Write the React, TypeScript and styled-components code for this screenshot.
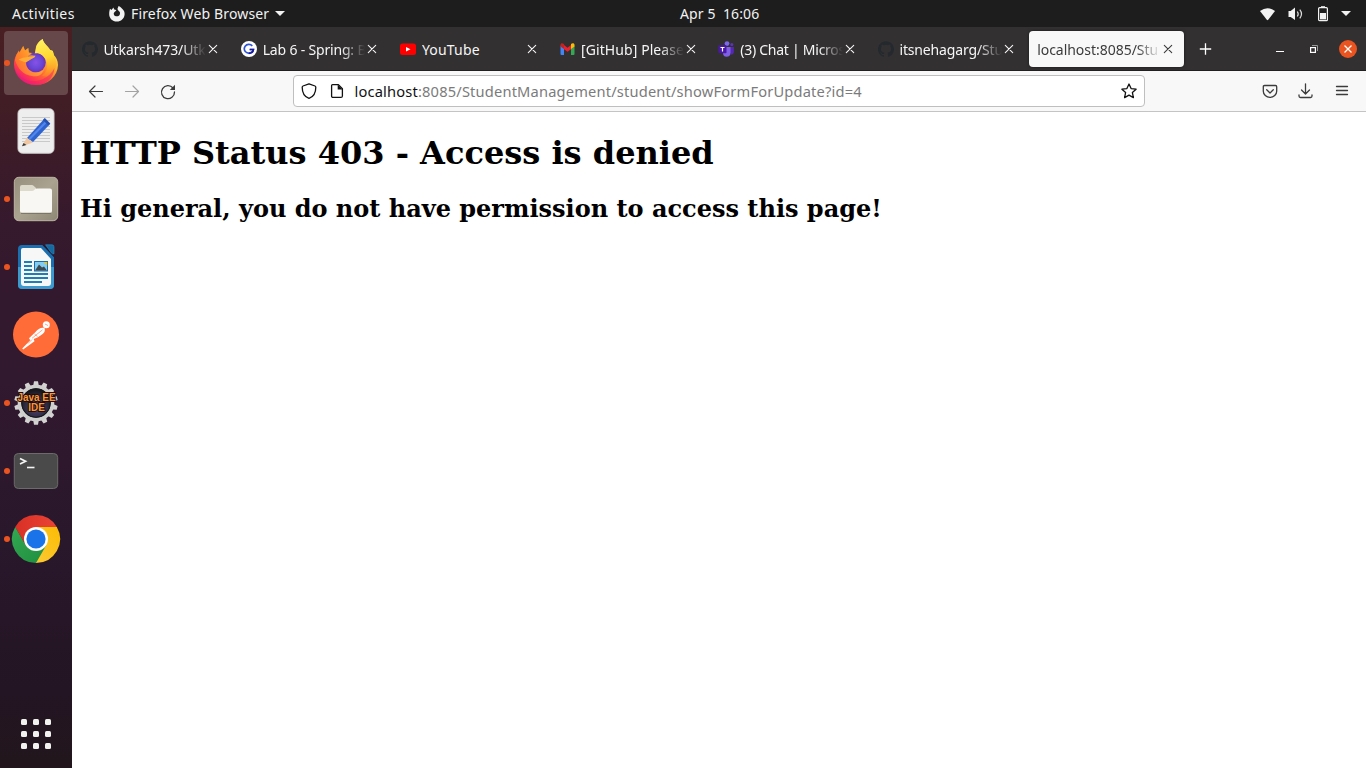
import React from 'react';
import styled, { createGlobalStyle } from 'styled-components';
import { SiGithub } from 'react-icons/si';

const GlobalStyle = createGlobalStyle`
  html, body { margin: 0; padding: 0; overflow: hidden; }
  * { box-sizing: border-box; }
  svg { display: block; flex: none; overflow: visible; }
`;

const Desktop = styled.div`
  width: 1366px;
  height: 768px;
  display: flex;
  flex-direction: column;
  overflow: hidden;
  background: #fff;
  font-family: 'Noto Sans', 'Open Sans', sans-serif;
  font-size: 14px;
`;

const SystemBar = styled.header`
  height: 27px;
  flex: none;
  display: grid;
  grid-template-columns: 680px 80px 1fr;
  align-items: center;
  background: #1d1d1d;
  color: #f2f2f2;
  line-height: 27px;
`;

const BarLeft = styled.div`
  display: flex;
  align-items: center;
  padding-left: 12px;
`;

const BarRight = styled.div`
  display: flex;
  align-items: center;
  justify-content: flex-end;
  gap: 13px;
  padding-right: 15px;
`;

const Label = styled.span<{ $spacing?: number; $width?: number }>`
  white-space: pre;
  flex: none;
  letter-spacing: ${p => p.$spacing ?? 0}px;
  width: ${p => (p.$width ? `${p.$width}px` : 'auto')};
`;

const AppMenu = styled.div`
  display: flex;
  align-items: center;
  gap: 6px;
  margin-left: 34px;
`;

const Body = styled.div`
  flex: 1;
  display: flex;
  min-height: 0;
`;

const Dock = styled.nav`
  width: 72px;
  flex: none;
  display: flex;
  flex-direction: column;
  align-items: center;
  gap: 4px;
  padding: 4px 0 2px;
  background: linear-gradient(to bottom, #491f22 0%, #3e1c27 15%, #35192d 27%, #31192f 48%, #29172b 70%, #231523 90%, #22161c 100%);
`;

const DockItem = styled.div<{ $active?: boolean; $last?: boolean }>`
  position: relative;
  width: 64px;
  height: 64px;
  flex: none;
  display: flex;
  align-items: center;
  justify-content: center;
  border-radius: 4px;
  margin-top: ${p => (p.$last ? 'auto' : '0')};
  background: ${p => (p.$active ? '#66484b' : 'transparent')};
`;

const RunningDot = styled.span`
  position: absolute;
  left: 0;
  top: 29px;
  width: 6px;
  height: 6px;
  border-radius: 50%;
  background: #e95420;
`;

const AppGrid = styled.div`
  display: grid;
  grid-template-columns: repeat(3, 6px);
  grid-auto-rows: 6px;
  gap: 6px;
`;

const GridDot = styled.i`
  border-radius: 1.5px;
  background: #f2f2ee;
`;

const Browser = styled.main`
  flex: 1;
  min-width: 0;
  display: flex;
  flex-direction: column;
`;

const TabStrip = styled.div`
  height: 44px;
  flex: none;
  display: flex;
  align-items: center;
  background: #333031;
  border-bottom: 1px solid #211f20;
`;

const Tab = styled.div<{ $selected?: boolean }>`
  width: 155.2px;
  height: 36px;
  flex: none;
  margin: 0 2px;
  padding: 0 10px 0 8px;
  display: flex;
  align-items: center;
  border-radius: 4px;
  color: ${p => (p.$selected ? '#3b3b3b' : '#f6f6f6')};
  background: ${p => (p.$selected ? '#f8f8f8' : 'transparent')};
  box-shadow: ${p => (p.$selected ? '0 0 3px rgba(0,0,0,.55)' : 'none')};
`;

const Favicon = styled.span`
  width: 16px;
  height: 16px;
  margin-right: 5.5px;
  flex: none;
`;

const TabTitle = styled.span<{ $spacing: number; $fade?: boolean }>`
  flex: 1;
  min-width: 0;
  overflow: hidden;
  white-space: nowrap;
  padding-top: 2px;
  line-height: 20px;
  letter-spacing: ${p => p.$spacing}px;
  mask-image: ${p => (p.$fade ? 'linear-gradient(to left, transparent, black 24px)' : 'none')};
`;

const CloseTab = styled.span`
  width: 12px;
  margin-left: 1px;
  display: flex;
  justify-content: center;
`;

const NewTab = styled.span`
  margin-left: 13px;
`;

const WindowControls = styled.div`
  margin-left: auto;
  padding-right: 9px;
  display: flex;
  align-items: center;
`;

const ControlSlot = styled.span`
  width: 34px;
  display: flex;
  justify-content: center;
  &:last-child { width: 18px; margin-left: 8px; }
`;

const Toolbar = styled.div`
  height: 41px;
  flex: none;
  display: flex;
  align-items: center;
  background: #f8f8f8;
  border-bottom: 1px solid #c4c4c4;
  padding: 0 16px;
  color: #3b3b3b;
`;

const NavButtons = styled.div`
  display: flex;
  gap: 20px;
  width: 205px;
`;

const UrlField = styled.div`
  width: 852px;
  height: 32px;
  display: flex;
  align-items: center;
  padding: 0 7px;
  background: #fff;
  border: 1px solid #bfbfbf;
  border-radius: 4px;
  color: #111;
`;

const UrlIcons = styled.span`
  display: flex;
  gap: 12px;
  margin-right: 9.5px;
`;

const UrlText = styled.span<{ $spacing: number }>`
  flex: 1;
  font-size: 14.67px;
  line-height: 20px;
  color: #7b7b7b;
  letter-spacing: ${p => p.$spacing}px;
  b { font-weight: 400; color: #111; }
`;

const ToolActions = styled.div`
  display: flex;
  gap: 20px;
  margin-left: auto;
`;

const Page = styled.article`
  flex: 1;
  padding: 1px 8px 0;
  overflow: hidden;
  background: #fff;
  color: #000;
  font-family: 'DejaVu Serif', serif;
  font-size: 16px;
`;

const Title = styled.h1`
  font-size: 32px;
  margin: 21.44px 0;
`;

const Subtitle = styled.h2`
  font-size: 24px;
  margin: 19.92px 0;
`;

const stroke = { fill: 'none', stroke: 'currentColor', strokeLinecap: 'round', strokeLinejoin: 'round' } as const;

const Caret = () => (
  <svg width="10" height="5" viewBox="0 0 10 5"><path d="M0 0h10L5 5z" fill="#f2f2f2" /></svg>
);

const FirefoxMono = () => (
  <svg width="16" height="16" viewBox="0 0 16 16">
    <path fill="#f2f2f2" d="M1 2.800 2.400 4 4.500 1.500l.6 1.900c1 .1 1.700.4 2.300 1.200L5.800 5.800c-1 .8-1.400 2-.7 3.100 1.100 2 4.600 1.900 5.600-.2.800-2 .1-3.100-1.200-3.900L8.400 2.900 9.600 0c2.300.8 2.700 2 3.800 2.900 1.700 1.400 2.400 3.200 2.200 5.600-.4 4.200-3.600 7.100-7.700 7.100C3.400 15.600.2 12.200.2 8.200.2 6 .5 4.500 1 2.800z" />
  </svg>
);

const WifiIcon = () => (
  <svg width="16" height="14" viewBox="0 0 16 14"><path d="M0 4Q7.500-1.600 15 4L8.200 12.800Q7.500 13.600 6.800 12.800z" fill="#f2f2f2" /></svg>
);
const VolumeIcon = () => (
  <svg width="16" height="16" viewBox="0 0 16 16">
    <path d="M-.500 5h2.200L6 1.500v12.500L1.700 11H-.500z" fill="#f2f2f2" />
    <path d="M8.300 5.500q1.800 2.500 0 5M10.800 3.700q3.400 4.300 0 8.600" fill="none" stroke="#ddd" strokeWidth="1.200" />
  </svg>
);
const BatteryIcon = () => (
  <svg width="10" height="16" viewBox="0 0 10 16">
    <path d="M3 .2h4V2H3z" fill="#f2f2f2" />
    <rect x=".6" y="1.700" width="8.800" height="13" rx="1" fill="none" stroke="#f2f2f2" strokeWidth="1.200" />
    <path d="M2 7h6v6.400H2z" fill="#f2f2f2" />
  </svg>
);

const FirefoxIcon = () => (
  <svg width="48" height="48" viewBox="0 0 48 48">
    <defs>
      <linearGradient id="fxBody" x1=".85" y1=".1" x2=".2" y2=".95">
        <stop offset="0" stopColor="#fff44f" /><stop offset=".35" stopColor="#ffb02e" />
        <stop offset=".6" stopColor="#ff6a33" /><stop offset=".82" stopColor="#ff3750" /><stop offset="1" stopColor="#e31587" />
      </linearGradient>
      <linearGradient id="fxFlame" x1=".4" y1="0" x2=".6" y2="1">
        <stop offset="0" stopColor="#fff261" /><stop offset=".5" stopColor="#ffd832" /><stop offset="1" stopColor="#ff8a20" stopOpacity=".4" />
      </linearGradient>
      <radialGradient id="fxGlobe" cx=".5" cy=".5" r=".55">
        <stop offset="0" stopColor="#8a50e8" /><stop offset=".5" stopColor="#6a4ad8" /><stop offset="1" stopColor="#6a2bb6" />
      </radialGradient>
      <linearGradient id="fxFox" x1="0" y1="0" x2="1" y2=".2">
        <stop offset="0" stopColor="#ff8a1c" /><stop offset="1" stopColor="#ffbd3a" />
      </linearGradient>
    </defs>
    <path d="M4.500 15.500 7 11.400l.4 2.300L11.200 7l1.800 4.400L16.300 9l.5 4.600 6.500 1 .7-7.400C25.800 3.500 28 1.500 30.700 0c.4 3.600 3.500 6 6.300 9.500l.8 1.300 3 1.200 1 4c2 1.800 4.200 5.400 4.200 10A22 20.500 0 0 1 24 46 22 20.500 0 0 1 2 25.500c0-4 1-7.500 2.500-10z" fill="url(#fxBody)" />
    <circle cx="23.800" cy="23.500" r="10" fill="url(#fxGlobe)" />
    <path d="M24 9C25 4.500 28 1.500 30.700 0c.5 4.200 4.600 6.200 7.500 11l2.600 1 1.400 5c4 6 2.500 15-4 19.200-2.400 1.600-6.200 1.600-8.200.3 8-4.500 6-16-.2-20.500-2-1.500-5-2-7-1.500z" fill="url(#fxFlame)" />
    <path d="M4.500 15.500 7 11.400l.4 2.300L11.200 7l1.800 4.400L16.300 9l.5 4.600c.5 1.600 2.700 2.900 6.700 3.100-1 2.400-3.600 2.500-5 3.800-1.600 1.500-3 1.300-4.300 2.700-.8 5.400 3.800 10.100 9.600 10.100 3.700 0 6-1.400 8-2.600-1.400 5-6 7.500-12 6.400C11 35.500 6 30 3 21z" fill="url(#fxFox)" opacity=".6" />
    <path d="M6.500 20.500c3-1.700 8.500-2.800 17-3.800-1 2.500-3.600 2.500-5 3.800-1.600 1.500-3 1.300-4.300 2.700-2.500-.2-5-1.200-7.700-2.700z" fill="#ffad35" />
    <path d="M3 31c5 10 17 14 28 9 5-2.300 9-6 11.500-11-1 11-9 17-18.500 17C14 46 6 40.500 3 31z" fill="#ef1b70" opacity=".5" />
  </svg>
);

const EditorIcon = () => (
  <svg width="38" height="46" viewBox="0 0 38 46">
    <rect x="1" y=".8" width="36" height="44.400" rx="4.500" fill="#eeeeee" stroke="#d2d2d2" />
    <path d="M5 9.500h28M5 12.500h28M5 15.500h28M5 18.500h28M5 21.500h28M5 24.500h28M5 27.500h28M5 30.500h28M5 33.500h28" stroke="#c9c9c9" />
    <path d="m10 30 17.500-19.500 5.500 5.500-17 18z" fill="#2f63cf" />
    <path d="m12 31.500 18-18.500" stroke="#5286eb" strokeWidth="2.200" />
    <path d="m26 12 1.800-2 5.500 5.500-2 2z" fill="#2451b0" />
    <path d="m9.800 29.800 6.200 4.800-11 3.700z" fill="#efc6a0" /><path d="m6.500 35 3 2-4.500 1.300z" fill="#3c3c3c" />
  </svg>
);

const FilesIcon = () => (
  <svg width="46" height="46" viewBox="0 0 46 46">
    <defs><linearGradient id="filesBg" x1="0" y1="0" x2="1" y2="1"><stop stopColor="#968f7d" /><stop offset=".5" stopColor="#aaa390" /><stop offset="1" stopColor="#8d8775" /></linearGradient></defs>
    <rect x="1.300" y="1.300" width="43.400" height="43.400" rx="4.500" fill="url(#filesBg)" stroke="#bcb5a3" />
    <path d="M7 11q0-2 2-2h10q1 0 1.600.8L23 12v6H7z" fill="#dedacb" />
    <path d="M7 15h12q1.500 0 2.500-1.300 1-1.200 2.500-1.200h13q2 0 2 2V35q0 2-2 2H9q-2 0-2-2z" fill="#f8f7f4" />
    <path d="M8 37.300h30" stroke="#736e60" />
  </svg>
);

const WriterIcon = () => (
  <svg width="38" height="46" viewBox="0 0 38 46">
    <path d="M5 1h20.500L37 13v28q0 4-4 4H5q-4 0-4-4V5q0-4 4-4z" fill="#1c6fae" />
    <path d="M1 23h36v18q0 4-4 4H5q-4 0-4-4z" fill="#3b9bcf" />
    <path d="M6 4h18l10 11v24q0 3-3 3H7q-3 0-3-3V6q0-2 2-2z" fill="#f7f7f7" />
    <path d="M25.500 1 37 13v-3.200L28.500 1z" fill="#231a35" />
    <path d="M28.500.8h6.500q2 0 2 2v7q-1.500.5-2.700-1z" fill="#16699f" stroke="#2c8fc8" strokeWidth=".6" />
    <path d="M7 18h8M7 22h8M7 26h8M7 30h24M7 34h24M7 38h18" stroke="#1d7fb8" strokeWidth="2" />
    <rect x="17.500" y="17.500" width="13" height="9.500" fill="#82cdf1" stroke="#176ea6" />
    <path d="m18 26.500 4-6 3 3 2-1 3 4z" fill="#3d4950" /><path d="M27 18h3.200v3.500z" fill="#ffc000" />
  </svg>
);

const PostmanIcon = () => (
  <svg width="46" height="46" viewBox="0 0 46 46">
    <circle cx="23" cy="22.500" r="23" fill="#ff6c37" />
    <circle cx="33.300" cy="12.800" r="3.500" fill="#fff" />
    <path d="M31.500 16C28 15 25 17 22.500 20L16 26.200l1.200 2L9.200 36.500l1 1 11.300-8.300-.8-2.200 4.300-1.800c5-3 8-5 6.500-9.200z" fill="#fff" />
    <path d="m19 26.300 10.500-8.500M21.500 22l3 2.500M15 31.500l4-4M32 12l3 1.500" fill="none" stroke="#ff6c37" strokeWidth=".6" />
  </svg>
);

const JavaIcon = () => (
  <svg width="46" height="46" viewBox="0 0 46 46">
    <defs><radialGradient id="javaOrb" cx=".5" cy=".65" r=".6"><stop stopColor="#51436d" /><stop offset=".6" stopColor="#302c45" /><stop offset="1" stopColor="#18171d" /></radialGradient></defs>
    {Array.from({ length: 14 }, (_, i) => (
      <path key={i} d="M20.200 5.500 21 1.300h4l.8 4.200z" fill="#d3d3d1" transform={`rotate(${(i * 360) / 14} 23 23)`} />
    ))}
    <circle cx="23" cy="23" r="16.500" fill="#26242b" stroke="#cfcfcd" strokeWidth="3.600" />
    <circle cx="23" cy="23" r="14.300" fill="url(#javaOrb)" stroke="#17161a" strokeWidth="1" />
    <g fontFamily="Liberation Sans, sans-serif" fontSize="10.500" fontWeight="700" textAnchor="middle" fill="#ff963c" stroke="#1a0e08" strokeWidth="1.800" paintOrder="stroke">
      <text x="23.500" y="21" textLength="38" lengthAdjust="spacingAndGlyphs">Java EE</text>
      <text x="23.500" y="31.200" textLength="16.500" lengthAdjust="spacingAndGlyphs">IDE</text>
    </g>
  </svg>
);

const TerminalIcon = () => (
  <svg width="46" height="38" viewBox="0 0 46 38">
    <rect x="1.300" y="1.500" width="43.400" height="35" rx="4" fill="#4a4a4a" stroke="#6b6b67" />
    <path d="m7 6.500 5.500 2.800L7 12" fill="none" stroke="#f5f5f5" strokeWidth="1.800" /><path d="M14 15.500h7.500" stroke="#f5f5f5" strokeWidth="1.600" />
  </svg>
);

const ChromeIcon = () => (
  <svg width="48" height="48" viewBox="0 0 48 48">
    <defs>
      <linearGradient id="crRed" x1="0" x2="1"><stop stopColor="#d93025" /><stop offset="1" stopColor="#ea4335" /></linearGradient>
      <linearGradient id="crYellow" x1="1" y1="0" x2="0" y2="1"><stop stopColor="#fbbc04" /><stop offset="1" stopColor="#fcc934" /></linearGradient>
      <linearGradient id="crGreen" x1="1" y1="1" x2="0" y2="0"><stop stopColor="#1e8e3e" /><stop offset="1" stopColor="#34a853" /></linearGradient>
    </defs>
    <path d="M3.200 12A24 24 0 0 1 44.800 12L24 24L13.600 30z" fill="url(#crRed)" />
    <path d="M44.800 12A24 24 0 0 1 24 48L24 34l10.400-16L24 12z" fill="url(#crYellow)" />
    <path d="M24 48A24 24 0 0 1 3.200 12L13.600 30 24 36l10.400-6z" fill="url(#crGreen)" />
    <circle cx="24" cy="24" r="12" fill="#fff" /><circle cx="24" cy="24" r="9.600" fill="#1a73e8" />
  </svg>
);

const GithubFavicon = () => <SiGithub size={16} color="#24292e" />;
const LabFavicon = () => (
  <svg width="16" height="16" viewBox="0 0 16 16">
    <circle cx="8" cy="8" r="8" fill="#fff" />
    <path d="M11.300 4.800A4.600 4.400 0 1 0 12.400 8.500H8.700" fill="none" stroke="#3155d0" strokeWidth="1.700" />
    <path d="M8.700 8.500h3.700a4.600 4.400 0 0 1-4.600 3.900" fill="none" stroke="#1c1896" strokeWidth="1.700" />
  </svg>
);
const YoutubeFavicon = () => (
  <svg width="16" height="16" viewBox="0 0 16 16"><rect y="2.500" width="16" height="11.400" rx="2.500" fill="#f00" /><path d="m6 6 4.500 2.200L6 10.500z" fill="#fff" /></svg>
);
const GmailFavicon = () => (
  <svg width="16" height="16" viewBox="0 0 16 16">
    <path d="M.500 4.500 4 7v7H1.500q-1 0-1-1z" fill="#4285f4" /><path d="M11 7 14.500 4.500V13q0 1-1 1H11z" fill="#34a853" />
    <path d="M4 4 7.500 6.700 11 4v4.200l-3.500 2.600L4 8.200z" fill="#ea2230" />
    <path d="M.500 4c0-1.800 1.700-2.300 3-1.300l.5.400v5L.500 5.600z" fill="#c5221f" /><path d="M11 3.100c1.700-1.400 3.500-.7 3.500 1v1.500L11 8.100z" fill="#fbbc04" />
  </svg>
);
const TeamsFavicon = () => (
  <svg width="16" height="16" viewBox="0 0 16 16">
    <circle cx="8" cy="2.600" r="2.400" fill="#7b68ee" /><circle cx="12.800" cy="3.600" r="1.500" fill="#5b35b8" />
    <path d="M9.500 6h5.400v4.500q0 3-3 3.300z" fill="#5527b5" /><path d="M4 6h7.500v5.500q0 4.300-4 4.300-3.500 0-3.500-4z" fill="#8061e6" />
    <rect x="-.5" y="4.300" width="8" height="8" rx=".8" fill="#4a18a9" /><path d="M1.500 6.500h4M3.500 6.500v4" stroke="#fff" strokeWidth="1.200" />
  </svg>
);

const tabs: { title: string; spacing: number; Icon?: React.FC; fade?: boolean; selected?: boolean }[] = [
  { title: 'Utkarsh473/Utk', spacing: -0.12, Icon: GithubFavicon, fade: true },
  { title: 'Lab 6 - Spring: B', spacing: -0.18, Icon: LabFavicon, fade: true },
  { title: 'YouTube', spacing: 0.2, Icon: YoutubeFavicon },
  { title: '[GitHub] Please', spacing: 0.08, Icon: GmailFavicon, fade: true },
  { title: '(3) Chat | Micros', spacing: -0.26, Icon: TeamsFavicon, fade: true },
  { title: 'itsnehagarg/Stu', spacing: -0.15, Icon: GithubFavicon, fade: true },
  { title: 'localhost:8085/Stu', spacing: -0.03, fade: true, selected: true },
];

const dockApps: { Icon: React.FC; running?: boolean; active?: boolean }[] = [
  { Icon: FirefoxIcon, running: true, active: true },
  { Icon: EditorIcon },
  { Icon: FilesIcon, running: true },
  { Icon: WriterIcon, running: true },
  { Icon: PostmanIcon },
  { Icon: JavaIcon, running: true },
  { Icon: TerminalIcon, running: true },
  { Icon: ChromeIcon, running: true },
];

const Cross = () => (
  <svg width="8" height="8" viewBox="0 0 8 8"><path d="m.3.300 7.400 7.400M7.700.300.300 7.700" {...stroke} strokeWidth="1.100" /></svg>
);

export default function App() {
  return (
    <Desktop>
      <GlobalStyle />
      <SystemBar>
        <BarLeft>
          <Label $width={63} $spacing={0.45}>Activities</Label>
          <AppMenu>
            <FirefoxMono />
            <Label $width={137.5} $spacing={0.15}>Firefox Web Browser</Label>
            <Caret />
          </AppMenu>
        </BarLeft>
        <Label $spacing={0.1}>{'Apr 5  16:06'}</Label>
        <BarRight>
          <WifiIcon />
          <VolumeIcon />
          <BatteryIcon />
          <Caret />
        </BarRight>
      </SystemBar>
      <Body>
        <Dock>
          {dockApps.map(({ Icon, running, active }, i) => (
            <DockItem key={i} $active={active}>
              {running && <RunningDot />}
              <Icon />
            </DockItem>
          ))}
          <DockItem $last>
            <AppGrid>{Array.from({ length: 9 }, (_, i) => <GridDot key={i} />)}</AppGrid>
          </DockItem>
        </Dock>
        <Browser>
          <TabStrip>
            {tabs.map(({ title, spacing, Icon, fade, selected }) => (
              <Tab key={title} $selected={selected}>
                {Icon && <Favicon><Icon /></Favicon>}
                <TabTitle $spacing={spacing} $fade={fade}>{title}</TabTitle>
                <CloseTab><Cross /></CloseTab>
              </Tab>
            ))}
            <NewTab><svg width="13" height="13" viewBox="0 0 13 13"><path d="M6.500 1.300v11.400M.8 7h11.400" fill="none" stroke="#fff" strokeWidth="1.300" /></svg></NewTab>
            <WindowControls>
              <ControlSlot><svg width="8" height="8" viewBox="0 0 8 8"><path d="M0 6.500h8" stroke="#fff" /></svg></ControlSlot>
              <ControlSlot>
                <svg width="8" height="8" viewBox="0 0 8 8">
                  <path d="M2 .5h5.500V6" fill="none" stroke="#999" /><rect x=".6" y="2.600" width="4.800" height="4.800" fill="none" stroke="#fff" strokeWidth="1.200" />
                </svg>
              </ControlSlot>
              <ControlSlot>
                <svg width="18" height="18" viewBox="0 0 18 18"><circle cx="9" cy="9" r="9" fill="#e95420" /><path d="m5.500 5.500 7 7m0-7-7 7" stroke="#fff" strokeWidth="1.300" /></svg>
              </ControlSlot>
            </WindowControls>
          </TabStrip>
          <Toolbar>
            <NavButtons>
              <svg width="16" height="16" viewBox="0 0 16 16"><path d="M14.500 8.500H1.500M7 3 1.500 8.500 7 14" {...stroke} strokeWidth="1.200" /></svg>
              <svg width="16" height="16" viewBox="0 0 16 16" opacity=".45"><path d="M1.500 8.500h13M9 3l5.500 5.500L9 14" {...stroke} strokeWidth="1.200" /></svg>
              <svg width="16" height="16" viewBox="0 0 16 16"><path d="M13 5A6.500 6.500 0 1 0 14.500 9" {...stroke} strokeWidth="1.300" /><path d="M15 1.800V7H9.800z" fill="currentColor" /></svg>
            </NavButtons>
            <UrlField>
              <UrlIcons>
                <svg width="16" height="16" viewBox="0 0 16 16"><path d="M8 .8 14 3q.8.3.8 1.200C14.800 10 12 14 8 15.300 4 14 1.200 10 1.200 4.200 1.200 3.300 2 3 2 3z" {...stroke} strokeWidth="1.300" /></svg>
                <svg width="16" height="16" viewBox="0 0 16 16"><path d="M3.600 1.600h5.800l4 4v7.300q0 1.500-1.500 1.500H4.100q-1.500 0-1.500-1.500V2.600q0-1 1-1z" {...stroke} strokeWidth="1.300" /><path d="M8.700 1.500v5h5z" fill="currentColor" /></svg>
              </UrlIcons>
              <UrlText $spacing={0.17}><b>localhost</b>:8085/StudentManagement/student/showFormForUpdate?id=4</UrlText>
              <svg width="16" height="16" viewBox="0 0 16 16"><path d="m8 1 2.100 4.600 5 .6-3.700 3.400 1 5L8 12.100l-4.400 2.500 1-5L.900 6.200l5-.6z" {...stroke} strokeWidth="1.300" /></svg>
            </UrlField>
            <ToolActions>
              <svg width="16" height="16" viewBox="0 0 16 16"><path d="M2.500 2.500h11q1.200 0 1.200 1.200v4.500a6.700 6.200 0 0 1-13.400 0V3.700q0-1.200 1.200-1.200zM4.700 6.800 8 10l3.300-3.200" {...stroke} strokeWidth="1.300" /></svg>
              <svg width="16" height="16" viewBox="0 0 16 16"><path d="M7.500.8v10M3.500 7l4 4 4-4M1 12v1q0 1.500 1.500 1.500h10q1.500 0 1.500-1.500v-1" {...stroke} strokeWidth="1.300" /></svg>
              <svg width="16" height="16" viewBox="0 0 16 16"><path d="M2.500 3.500h11M2.500 7.500h11M2.500 11.500h11" {...stroke} strokeWidth="1.300" /></svg>
            </ToolActions>
          </Toolbar>
          <Page>
            <Title>HTTP Status 403 - Access is denied</Title>
            <Subtitle>Hi general, you do not have permission to access this page!</Subtitle>
          </Page>
        </Browser>
      </Body>
    </Desktop>
  );
}
